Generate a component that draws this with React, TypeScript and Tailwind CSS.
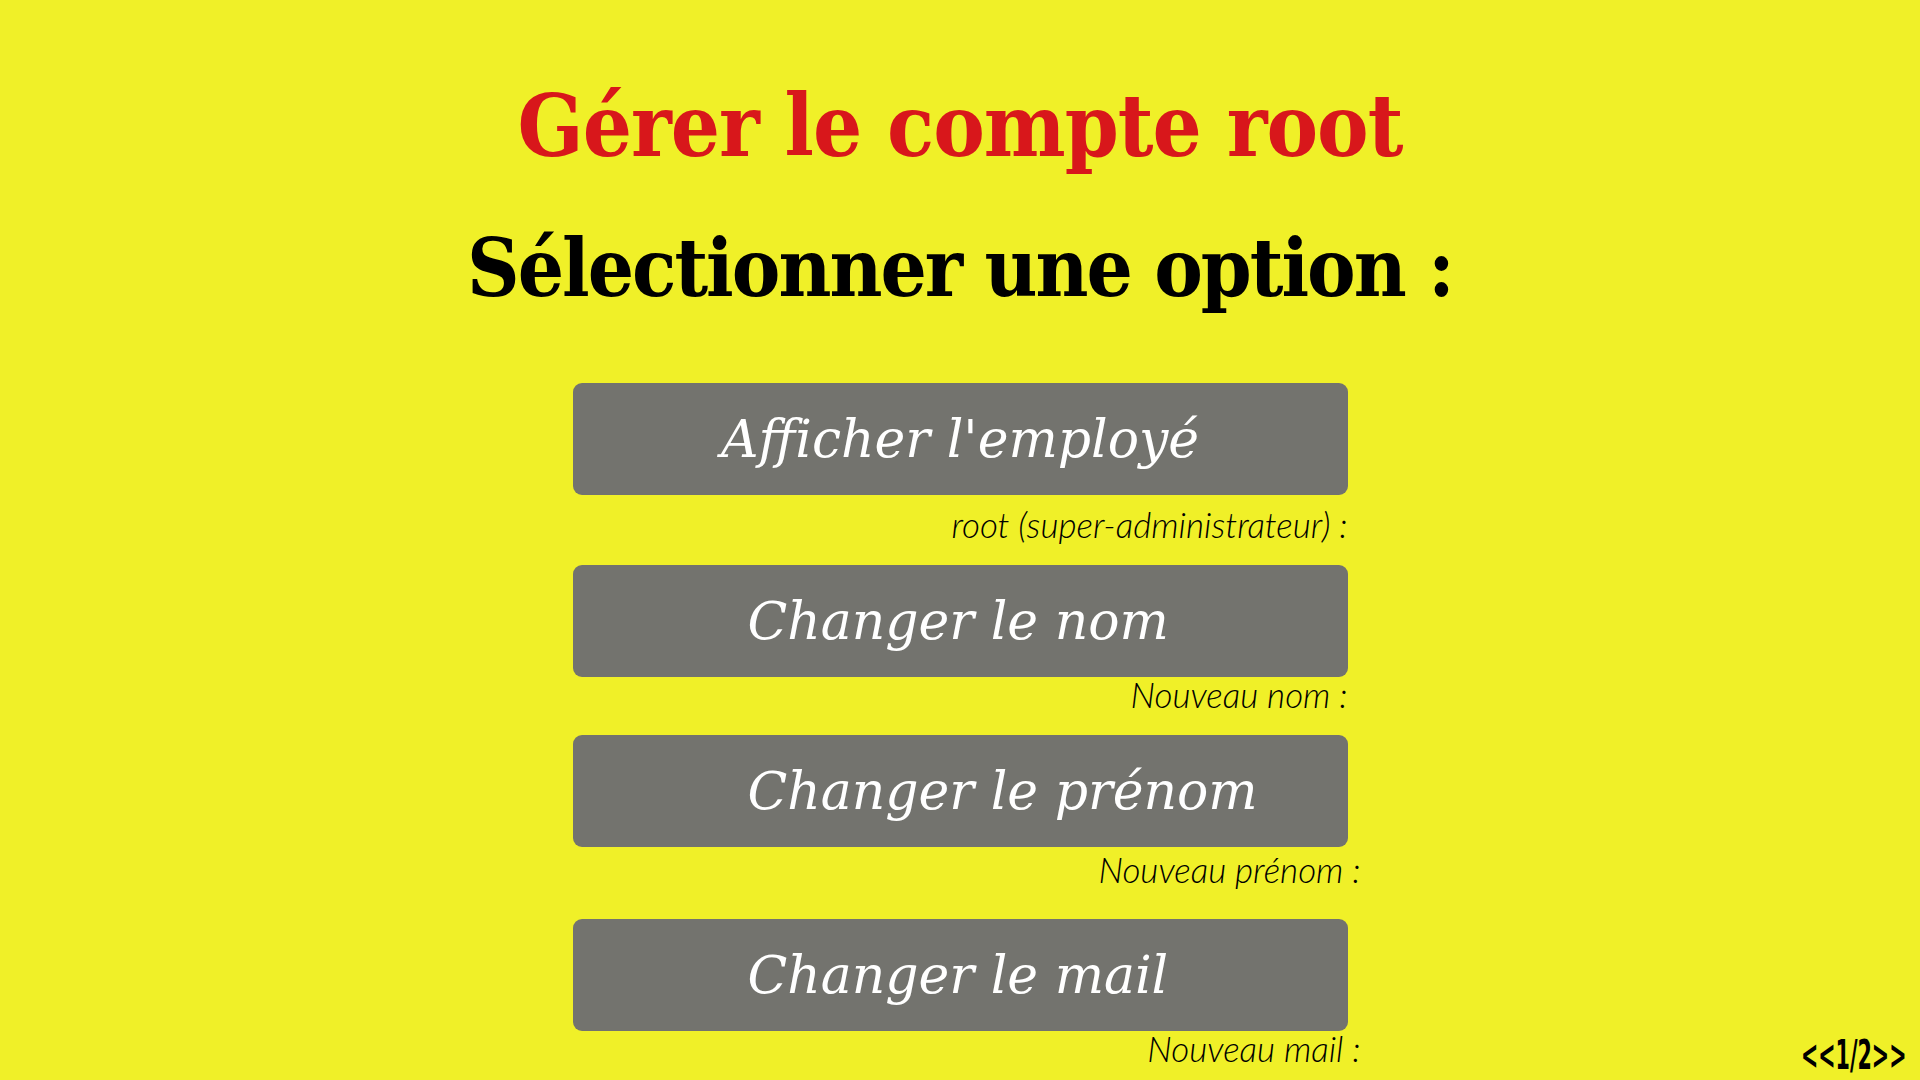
const items = [
    { label: "Afficher l'employé", note: "root (super-administrateur) :", pad: "justify-center", noteClass: "mt-[12px] mb-[24px]" },
    { label: "Changer le nom", note: "Nouveau nom :", pad: "pl-[175px]", noteClass: "mt-0 mb-[24px]" },
    { label: "Changer le prénom", note: "Nouveau prénom :", pad: "pl-[175px]", noteClass: "mt-[5px] mb-[33px] -mr-[13px]" },
    { label: "Changer le mail", note: "Nouveau mail :", pad: "pl-[175px]", noteClass: "mt-0 -mr-[13px]" },
];

export default function App() {
    return (
        <div className="relative w-full h-[1080px] overflow-hidden bg-[#f0f028] flex flex-col items-center">
            <h1 className="mt-[78px] text-[#d8171b] text-[86px] leading-[96px] font-bold font-['DejaVu_Serif',serif] font-stretch-condensed tracking-[-1px]">
                Gérer le compte root
            </h1>
            <h2 className="mt-[46px] text-black text-[81px] leading-[96px] font-bold font-['DejaVu_Serif',serif] font-stretch-condensed tracking-[-2px]">
                Sélectionner une option :
            </h2>

            <div className="mt-[67px] w-[775px] flex flex-col">
                {items.map((item) => (
                    <div key={item.label} className="flex flex-col">
                        <button
                            className={`h-[112px] w-full rounded-[9px] bg-[#73736e] flex items-center text-white italic text-[52px] font-['DejaVu_Serif',serif] ${item.pad}`}
                        >
                            {item.label}
                        </button>
                        <div
                            className={`h-[34px] leading-[34px] text-right text-black italic font-light text-[35px] font-['Lato',sans-serif] ${item.noteClass}`}
                        >
                            {item.note}
                        </div>
                    </div>
                ))}
            </div>

            <div className="absolute right-[14px] bottom-[4px] origin-right scale-x-[0.56] text-black font-bold text-[41px] leading-[42px] font-['DejaVu_Sans',sans-serif] font-stretch-condensed">
                {"<<1/2>>"}
            </div>
        </div>
    );
}
